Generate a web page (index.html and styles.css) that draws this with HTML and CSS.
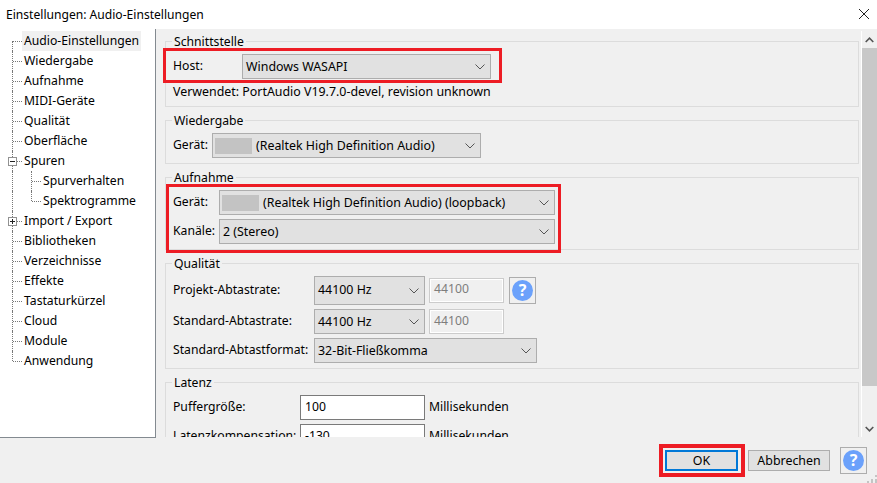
FILE: index.html
```html
<!DOCTYPE html>
<html lang="de">
<head>
<meta charset="utf-8">
<title>Einstellungen: Audio-Einstellungen</title>
<link rel="stylesheet" href="styles.css">
</head>
<body>
<div class="dialog">
  <header class="titlebar">
    <span>Einstellungen: Audio-Einstellungen</span>
    <svg class="close" width="12" height="12" viewBox="0 0 12 12"><path d="M1 1l10 10M11 1L1 11" stroke="#222" stroke-width="1" fill="none"/></svg>
  </header>
  <div class="main">
    <nav class="tree">
      <div class="row selected-row"><span class="label sel">Audio-Einstellungen</span></div>
      <div class="row"><span class="label">Wiedergabe</span></div>
      <div class="row"><span class="label">Aufnahme</span></div>
      <div class="row"><span class="label">MIDI-Geräte</span></div>
      <div class="row"><span class="label">Qualität</span></div>
      <div class="row"><span class="label">Oberfläche</span></div>
      <div class="row"><i class="expander minus"></i><span class="label">Spuren</span></div>
      <div class="row child"><span class="label">Spurverhalten</span></div>
      <div class="row child last-child"><span class="label">Spektrogramme</span></div>
      <div class="row"><i class="expander plus"></i><span class="label">Import / Export</span></div>
      <div class="row"><span class="label">Bibliotheken</span></div>
      <div class="row"><span class="label">Verzeichnisse</span></div>
      <div class="row"><span class="label">Effekte</span></div>
      <div class="row"><span class="label">Tastaturkürzel</span></div>
      <div class="row"><span class="label">Cloud</span></div>
      <div class="row"><span class="label">Module</span></div>
      <div class="row last"><span class="label">Anwendung</span></div>
    </nav>
    <div class="panel">
      <div class="groups">
        <fieldset class="group g-host">
          <legend>Schnittstelle</legend>
          <div class="line">
            <span class="cap w-host">Host:</span>
            <div class="combo w-hostc"><span>Windows WASAPI</span><svg class="chev" width="10" height="6" viewBox="0 0 10 6"><path d="M.5 .5L5 5 9.5 .5" stroke="#555" fill="none"/></svg></div>
          </div>
          <p class="note">Verwendet: PortAudio V19.7.0-devel, revision unknown</p>
        </fieldset>
        <fieldset class="group g-play">
          <legend>Wiedergabe</legend>
          <div class="line">
            <span class="cap w-play">Gerät:</span>
            <div class="combo w-playc"><span class="redact"></span><span>(Realtek High Definition Audio)</span><svg class="chev" width="10" height="6" viewBox="0 0 10 6"><path d="M.5 .5L5 5 9.5 .5" stroke="#555" fill="none"/></svg></div>
          </div>
        </fieldset>
        <fieldset class="group g-rec">
          <legend>Aufnahme</legend>
          <div class="line">
            <span class="cap w-rec">Gerät:</span>
            <div class="combo grow"><span class="redact"></span><span>(Realtek High Definition Audio) (loopback)</span><svg class="chev" width="10" height="6" viewBox="0 0 10 6"><path d="M.5 .5L5 5 9.5 .5" stroke="#555" fill="none"/></svg></div>
          </div>
          <div class="line gap4">
            <span class="cap w-rec">Kanäle:</span>
            <div class="combo grow"><span>2 (Stereo)</span><svg class="chev" width="10" height="6" viewBox="0 0 10 6"><path d="M.5 .5L5 5 9.5 .5" stroke="#555" fill="none"/></svg></div>
          </div>
        </fieldset>
        <fieldset class="group g-qual">
          <legend>Qualität</legend>
          <div class="line">
            <span class="cap w-qual">Projekt-Abtastrate:</span>
            <div class="combo w-rate tall"><span>44100 Hz</span><svg class="chev" width="10" height="6" viewBox="0 0 10 6"><path d="M.5 .5L5 5 9.5 .5" stroke="#555" fill="none"/></svg></div>
            <div class="field disabled tall">44100</div>
            <button class="help small-gap" type="button"><span class="help-dot">?</span></button>
          </div>
          <div class="line gap4">
            <span class="cap w-qual">Standard-Abtastrate:</span>
            <div class="combo w-rate"><span>44100 Hz</span><svg class="chev" width="10" height="6" viewBox="0 0 10 6"><path d="M.5 .5L5 5 9.5 .5" stroke="#555" fill="none"/></svg></div>
            <div class="field disabled short">44100</div>
          </div>
          <div class="line gap4">
            <span class="cap w-qual">Standard-Abtastformat:</span>
            <div class="combo w-format"><span>32-Bit-Fließkomma</span><svg class="chev" width="10" height="6" viewBox="0 0 10 6"><path d="M.5 .5L5 5 9.5 .5" stroke="#555" fill="none"/></svg></div>
          </div>
        </fieldset>
        <fieldset class="group g-lat">
          <legend>Latenz</legend>
          <div class="line">
            <span class="cap w-lat">Puffergröße:</span>
            <div class="field live">100</div>
            <span class="unit">Millisekunden</span>
          </div>
          <div class="line gap4">
            <span class="cap w-lat">Latenzkompensation:</span>
            <div class="field live">-130</div>
            <span class="unit">Millisekunden</span>
          </div>
        </fieldset>
      </div>
      <div class="scrollbar">
        <svg class="sb-arrow" width="9" height="6" viewBox="0 0 9 6"><path d="M.7 5L4.5 1.2 8.3 5" stroke="#555" stroke-width="1.6" fill="none"/></svg>
        <div class="thumb"></div>
        <svg class="sb-arrow down" width="9" height="6" viewBox="0 0 9 6"><path d="M.7 1L4.5 4.8 8.3 1" stroke="#555" stroke-width="1.6" fill="none"/></svg>
      </div>
    </div>
  </div>
  <footer class="actions">
    <button class="btn ok" type="button">OK</button>
    <button class="btn cancel" type="button">Abbrechen</button>
    <button class="help" type="button"><span class="help-dot">?</span></button>
    <svg class="grip" width="10" height="10" viewBox="0 0 10 10"><path d="M8 2h2v2H8zM4 6h2v2H4zM8 6h2v2H8zM0 8h2v2H0zM4 8h2v2H4zM8 8h2v2H8z" fill="#c4c4c4"/></svg>
  </footer>
  <div class="mark mark-host"></div>
  <div class="mark mark-rec"></div>
  <div class="mark mark-ok"></div>
</div>
</body>
</html>
```

FILE: styles.css
```css
* { box-sizing: border-box; }
html, body { margin: 0; padding: 0; }
body {
  width: 877px;
  height: 483px;
  overflow: hidden;
  font-family: "Noto Sans", "Noto Sans CJK SC", sans-serif;
  font-size: 12.2px;
  line-height: 18px;
  color: #000;
  background: #f0f0f0;
}
.dialog { position: relative; width: 877px; height: 483px; display: flex; flex-direction: column; }
.titlebar {
  height: 29px; flex: none; background: #fff;
  display: flex; align-items: center; justify-content: space-between;
  padding: 0 7px 0 6px; font-size: 12.1px;
}
.close { margin-top: -2px; }
.main { height: 409px; flex: none; display: flex; }
.tree {
  width: 156px; flex: none; background: #fff;
  border-right: 1px solid #838a90; border-bottom: 1px solid #838a90;
  padding-top: 2px;
}
.row { position: relative; height: 20px; padding-left: 22px; display: flex; align-items: center; }
.row::before { content: ""; position: absolute; left: 12px; top: 0; bottom: 0; border-left: 1px dotted #777; }
.row::after { content: ""; position: absolute; left: 13px; width: 9px; top: 10px; border-top: 1px dotted #777; }
.selected-row::before { top: 10px; }
.last::before { bottom: 10px; }
.label { padding: 0 2px; height: 20px; line-height: 19px; white-space: nowrap; }
.label.sel { background: #f0f0f0; }
.child { padding-left: 41px; }
.child::after { left: 32px; }
.child > .label::before { content: ""; position: absolute; left: 31px; top: 0; bottom: 0; border-left: 1px dotted #777; }
.last-child > .label::before { bottom: 10px; }
.expander {
  position: absolute; left: 8px; top: 6px; width: 9px; height: 9px; z-index: 1;
  background: #fff; border: 1px solid #919191;
}
.expander::before { content: ""; position: absolute; left: 1px; top: 3px; width: 5px; height: 1px; background: #222; }
.plus::after { content: ""; position: absolute; left: 3px; top: 1px; width: 1px; height: 5px; background: #222; }

.panel { flex: 1; display: flex; min-width: 0; }
.groups { width: 705px; flex: none; height: 408px; overflow: hidden; padding: 3px 0 0 9px; }
.group {
  margin: 0 0 4px; padding: 4px 0 0 7px; width: 694px;
  border: 1px solid #dcdcdc; min-width: 0;
}
.group legend { padding: 0 2px; margin-left: -1px; line-height: 20px; height: 18px; }
.g-host { height: 75px; }
.g-play { height: 53px; }
.g-rec { height: 82px; }
.g-qual { height: 115px; }
.line { display: flex; align-items: center; }
.gap4 { margin-top: 4px; }
.cap { flex: none; white-space: nowrap; margin-top: -2px; }
.w-host { width: 69px; }
.w-play { width: 39px; }
.w-rec { width: 46px; }
.w-qual { width: 141px; }
.w-lat { width: 127px; }
.combo {
  height: 25px; display: flex; align-items: center; position: relative; white-space: nowrap;
  background: #e1e1e1; border: 1px solid #adadad; padding: 0 4px 0 3px; font-size: 12.4px;
}
.combo .chev { position: absolute; right: 5px; top: 9px; }
.w-hostc { width: 249px; }
.w-playc { width: 269px; }
.grow { width: 336px; }
.w-rate { width: 111px; }
.w-format { width: 223px; }
.tall { height: 29px; padding-bottom: 2px; }
.tall .chev { top: 11px; }
.redact { width: 37px; height: 16px; background: #c3c3c3; margin: 0 4px 0 -1px; }
.note { margin: 0; padding-top: 4px; white-space: nowrap; font-size: 12.4px; }
.field {
  width: 125px; height: 25px; padding: 0 4px 2px; border: 1px solid #7a7a7a; background: #fff;
  display: flex; align-items: center;
}
.field.disabled {
  width: 75px; margin-left: 4px; color: #7d7d7d; background: #f0f0f0;
  border: 1px solid #ccc; box-shadow: inset 0 0 0 1px #fff; align-items: flex-start; padding-top: 1px;
}
.field.short { padding-top: 2px; }
.unit { margin-left: 4px; margin-top: -2px; }
.help {
  width: 27px; height: 27px; flex: none; padding: 0; background: #f0f0f0;
  border: 1px solid #adadad; display: flex; align-items: center; justify-content: center;
}
.small-gap { margin-left: 5px; }
.help-dot {
  width: 21px; height: 21px; border-radius: 50%; background: #6ba1fb; color: #fff;
  font: 700 16px/21px "Noto Sans", sans-serif; text-align: center; display: block;
}
.scrollbar {
  width: 16px; flex: none; height: 406px; margin-top: 2px; background: #f0f0f0;
  border-left: 1px solid #fff; display: flex; flex-direction: column; align-items: center;
}
.sb-arrow { margin-top: 6px; flex: none; }
.sb-arrow.down { margin-top: 40px; }
.thumb { width: 15px; height: 338px; margin-top: 5px; background: #c8c8c8; flex: none; }

.actions { flex: 1; position: relative; display: flex; align-items: flex-start; padding: 9px 0 0 665px; }
.btn {
  height: 21px; margin-top: 3px; background: #e1e1e1; border: 1px solid #adadad; padding: 0;
  font: 12.4px/17px "Noto Sans", sans-serif; color: #000;
}
.ok { width: 73px; border: 2px solid #0078d7; }
.cancel { width: 82px; margin-left: 10px; }
.actions .help { margin-left: 10px; }
.grip { position: absolute; right: 0; bottom: 0; }
.mark { position: absolute; border: 3px solid #ed1c24; pointer-events: none; }
.mark-host { left: 163px; top: 48px; width: 339px; height: 35px; }
.mark-rec { left: 166px; top: 184px; width: 395px; height: 69px; }
.mark-ok { left: 659px; top: 444px; width: 86px; height: 33px; border-width: 4px; }
```
